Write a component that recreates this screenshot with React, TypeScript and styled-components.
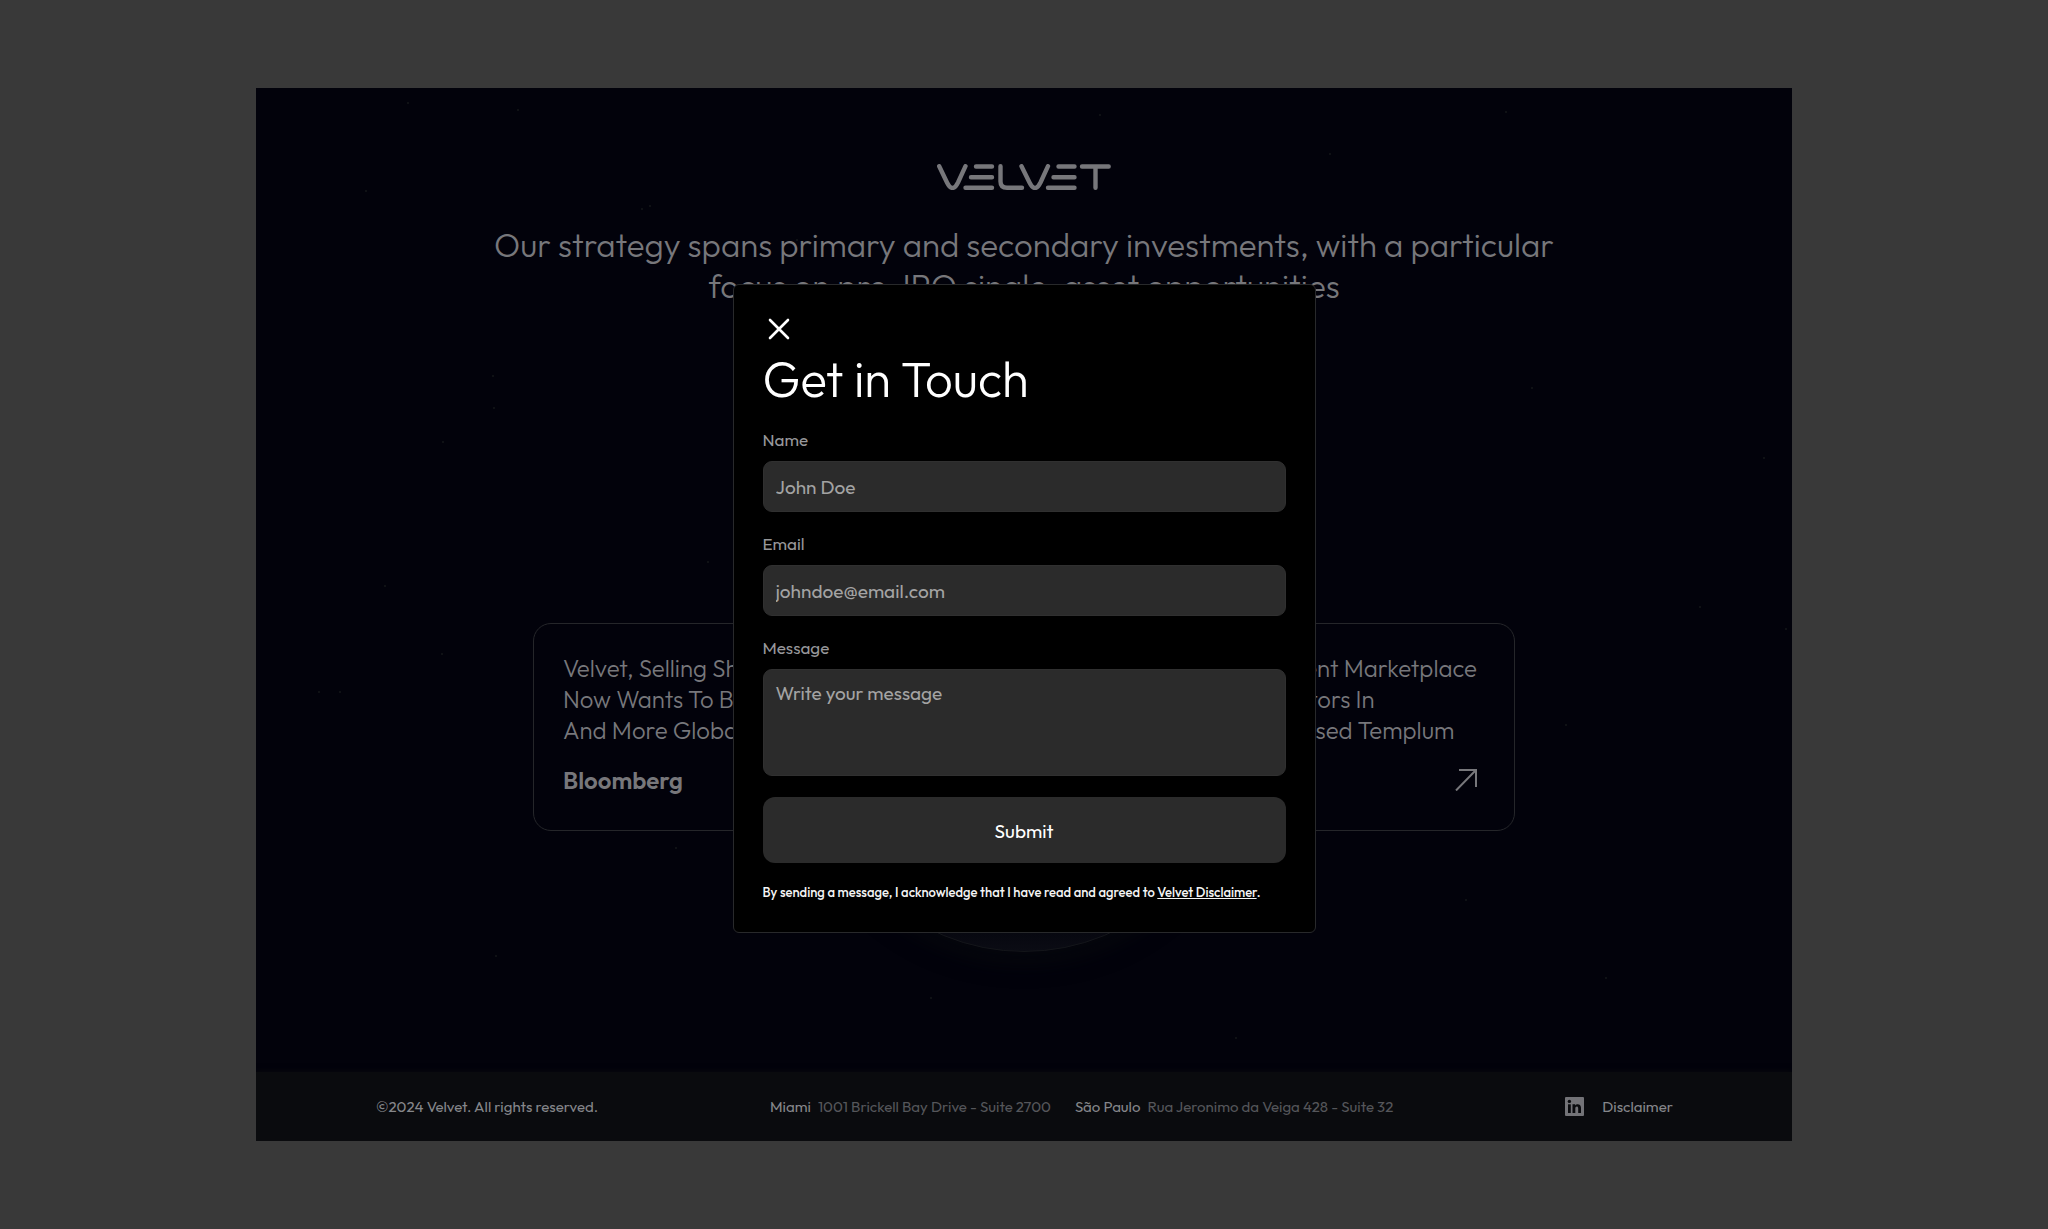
import React from 'react';
import styled, { createGlobalStyle } from 'styled-components';

const GlobalStyle = createGlobalStyle`
  *, *::before, *::after { box-sizing: border-box; }
  body {
    margin: 0;
    background: #393939;
    font-family: Outfit, Lato, 'Open Sans', sans-serif;
    -webkit-font-smoothing: antialiased;
  }
`;

const Backdrop = styled.div`
  min-height: 100vh;
  padding: 88px 12.5%;
  display: flex;
  background: #393939;
`;

const Site = styled.div`
  position: relative;
  flex: 1;
  display: flex;
  flex-direction: column;
  overflow: hidden;
  background: #02020b;
  color: #77777b;
`;

const Stars = styled.svg`
  position: absolute;
  inset: 0;
  width: 100%;
  height: 100%;
`;

const Globe = styled.div`
  position: absolute;
  left: 50%;
  bottom: 189px;
  width: 420px;
  height: 420px;
  margin-left: -210px;
  border-radius: 50%;
  border: 1px solid #14161a;
  background: linear-gradient(#02020b 90%, #0b0c14);
  box-shadow: 0 8px 24px #06080d;
`;

const Main = styled.main`
  position: relative;
  flex: 1;
  display: flex;
  flex-direction: column;
  align-items: center;
  padding: 76px 24px 0;
`;

const Logo = styled.svg`
  display: block;
  width: 174px;
  height: 26px;
  fill: none;
  stroke: #77777b;
  stroke-width: 4.4;
  stroke-linecap: round;
  stroke-linejoin: round;
`;

const Strategy = styled.h1`
  max-width: 1120px;
  margin: 35px 0 0;
  font-size: 33px;
  line-height: 41px;
  font-weight: 300;
  text-align: center;
`;

const News = styled.section`
  display: grid;
  grid-template-columns: repeat(2, minmax(0, 1fr));
  gap: 20px;
  width: 100%;
  max-width: 982px;
  margin-top: 316px;
`;

const Card = styled.article`
  display: flex;
  flex-direction: column;
  justify-content: space-between;
  height: 208px;
  padding: 29px 37px 30px 29px;
  border: 1px solid #25262a;
  border-radius: 18px;
`;

const Headline = styled.h2<{ $end?: boolean }>`
  align-self: ${(p) => (p.$end ? 'flex-end' : 'flex-start')};
  margin: 0;
  font-size: 24px;
  line-height: 31px;
  font-weight: 300;
  white-space: pre;
`;

const CardFoot = styled.div`
  display: flex;
  align-items: center;
  justify-content: space-between;
  height: 40px;
`;

const Source = styled.strong`
  font-size: 24px;
  line-height: 30px;
  font-weight: 600;
`;

const ArrowLink = styled.a`
  display: flex;
  margin-left: auto;
  color: inherit;
`;

const Footer = styled.footer`
  position: relative;
  display: flex;
  align-items: center;
  justify-content: space-between;
  min-height: 69px;
  padding: 0 119px 0 120px;
  background: #0a0b0e;
  box-shadow: 0 0 6px #0a0b0e;
  font-size: 15px;
  line-height: 20px;
  color: #85868a;
`;

const FooterGroup = styled.div<{ $gap: number }>`
  display: flex;
  align-items: center;
  gap: ${(p) => p.$gap}px;
`;

const Street = styled.span`
  color: #55565a;
`;

const FooterLink = styled.a`
  display: flex;
  color: inherit;
  text-decoration: none;
`;

const Overlay = styled.div`
  position: absolute;
  inset: 0;
  display: grid;
  place-items: center;
  padding-bottom: 12px;
`;

const Dialog = styled.form`
  width: 583px;
  max-width: 100%;
  display: flex;
  flex-direction: column;
  align-items: stretch;
  padding: 28px 29px 30px;
  background: #000;
  border: 1px solid #28292b;
  border-radius: 6px;
`;

const CloseButton = styled.button`
  display: grid;
  place-items: center;
  align-self: flex-start;
  width: 32px;
  height: 32px;
  padding: 0;
  border: 0;
  background: none;
  color: #fff;
`;

const Title = styled.h2`
  margin: 4px 0 22px;
  font-size: 49px;
  line-height: 60px;
  font-weight: 300;
  color: #fff;
`;

const Field = styled.div`
  display: flex;
  flex-direction: column;
  gap: 11px;
  margin-bottom: 22px;

  &:first-of-type { margin-top: -1px; }
  &:last-of-type { margin-bottom: 21px; }
`;

const Label = styled.label`
  font-size: 17px;
  line-height: 20px;
  color: #97979a;
`;

const Input = styled.input`
  height: 51px;
  padding: 1px 12px 0;
  border: 1px solid #303030;
  border-radius: 9px;
  outline: 0;
  background: #2b2b2b;
  color: #fff;
  font: inherit;
  font-size: 19px;

  &::placeholder { color: #a3a3a3; opacity: 1; }
`;

const TextArea = styled(Input).attrs({ as: 'textarea' })`
  height: 107px;
  padding-top: 11px;
  line-height: 24px;
  resize: none;
`;

const Submit = styled.button`
  height: 66px;
  padding: 1px 0 0;
  border: 0;
  border-radius: 12px;
  background: #2b2b2b;
  color: #fff;
  font: inherit;
  font-size: 19px;
`;

const Consent = styled.p`
  margin: 19px 0 0;
  font-size: 13px;
  line-height: 20px;
  font-weight: 500;
  color: #f4f4f4;

  a { color: inherit; }
`;

const stars = [
  [152, 15], [262, 22], [110, 103], [386, 121], [394, 118], [541, 152], [237, 288],
  [238, 320], [187, 354], [452, 474], [129, 498], [186, 566], [63, 604], [84, 604],
  [844, 27], [1074, 66], [1250, 24], [1276, 300], [1508, 370], [1444, 519], [1310, 637],
  [1530, 541], [980, 950], [1210, 812], [1350, 890], [420, 760], [675, 910], [240, 868],
];

const VelvetLogo = () => (
  <Logo viewBox="0 0 174 26" role="img" aria-label="Velvet">
    <path d="M2.200 2.200 L10 18.500 Q15.500 29.500 21 18.500 L28.500 2.200" />
    <path d="M39 2.500 H55 M34 13.300 H55 M28.500 23.800 H55" />
    <path d="M63.500 2.200 V17.500 Q63.500 23.800 70 23.800 H85" />
    <path d="M84.500 2.200 L92.500 18.500 Q98 29.500 103.500 18.500 L111 2.200" />
    <path d="M121.500 2.500 H137.500 M116.500 13.300 H137.500 M111 23.800 H137.500" />
    <path d="M145 2.500 H171.700 M158.500 2.500 V23.800" />
  </Logo>
);

const Arrow = () => (
  <ArrowLink href="#article" aria-label="Read article">
    <svg width="22" height="22" viewBox="0 0 22 22" fill="none" stroke="currentColor" strokeWidth="2" aria-hidden="true">
      <path d="M4 1 H21 V18 M21 1 L1 21.500" />
    </svg>
  </ArrowLink>
);

export default function App() {
  return (
    <>
      <GlobalStyle />
      <Backdrop>
        <Site>
          <Stars aria-hidden="true">
            {stars.map(([x, y]) => (
              <circle key={`${x}-${y}`} cx={x} cy={y} r="1" fill="#15171a" />
            ))}
          </Stars>
          <Globe />
          <Main>
            <VelvetLogo />
            <Strategy>
              Our strategy spans primary and secondary investments, with a particular focus on pre-IPO
              single-asset opportunities
            </Strategy>
            <News>
              <Card>
                <Headline>{'Velvet, Selling Shares In Startups,\nNow Wants To Buy Marketplaces\nAnd More Globally'}</Headline>
                <CardFoot>
                  <Source>Bloomberg</Source>
                  <Arrow />
                </CardFoot>
              </Card>
              <Card>
                <Headline $end>{'Velvet Acquires Investment Marketplace\nTo Bring Access To Investors In\nAgreements With US-Based Templum'}</Headline>
                <CardFoot>
                  <Arrow />
                </CardFoot>
              </Card>
            </News>
          </Main>
          <Footer>
            <span>©2024 Velvet. All rights reserved.</span>
            <FooterGroup $gap={24}>
              <FooterGroup $gap={7}>
                <span>Miami</span>
                <Street>1001 Brickell Bay Drive - Suite 2700</Street>
              </FooterGroup>
              <FooterGroup $gap={7}>
                <span>São Paulo</span>
                <Street>Rua Jeronimo da Veiga 428 - Suite 32</Street>
              </FooterGroup>
            </FooterGroup>
            <FooterGroup $gap={18}>
              <FooterLink href="#linkedin" aria-label="LinkedIn">
                <svg width="19" height="19" viewBox="0 0 19 19" aria-hidden="true">
                  <rect width="19" height="19" rx="1" fill="#737377" />
                  <g fill="#0a0b0e">
                    <circle cx="4.400" cy="4.400" r="1.700" />
                    <path d="M3 7.300 H5.800 V16 H3 Z" />
                    <path d="M7.500 7.300 H10.200 V8.500 C11.400 6.400 16 6.500 16 10.700 V16 H13.200 V11.500 C13.200 8.800 10.300 9 10.300 11.500 V16 H7.500 Z" />
                  </g>
                </svg>
              </FooterLink>
              <FooterLink href="#disclaimer">Disclaimer</FooterLink>
            </FooterGroup>
          </Footer>
          <Overlay>
            <Dialog role="dialog" aria-labelledby="contact-title" onSubmit={(e) => e.preventDefault()}>
              <CloseButton type="button" aria-label="Close">
                <svg width="22" height="22" viewBox="0 0 22 22" fill="none" stroke="currentColor" strokeWidth="2.600" strokeLinecap="round" aria-hidden="true">
                  <path d="M2 2 L20 20 M20 2 L2 20" />
                </svg>
              </CloseButton>
              <Title id="contact-title">Get in Touch</Title>
              <Field>
                <Label htmlFor="name">Name</Label>
                <Input id="name" type="text" placeholder="John Doe" />
              </Field>
              <Field>
                <Label htmlFor="email">Email</Label>
                <Input id="email" type="email" placeholder="johndoe@email.com" />
              </Field>
              <Field>
                <Label htmlFor="message">Message</Label>
                <TextArea id="message" placeholder="Write your message" />
              </Field>
              <Submit type="submit">Submit</Submit>
              <Consent>
                By sending a message, I acknowledge that I have read and agreed to{' '}
                <a href="#disclaimer">Velvet Disclaimer</a>.
              </Consent>
            </Dialog>
          </Overlay>
        </Site>
      </Backdrop>
    </>
  );
}
